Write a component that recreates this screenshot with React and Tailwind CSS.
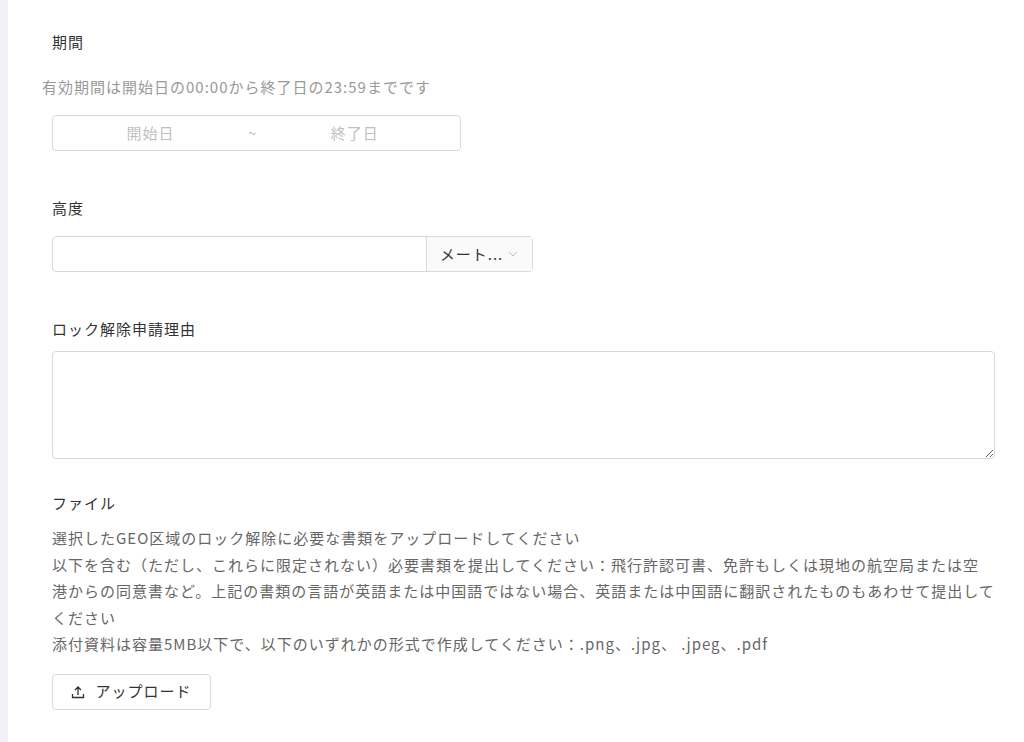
export default function App() {
  return (
    <div className="flex min-h-[742px] bg-white text-[15px] tracking-[1px] text-[#333]" style={{ fontFamily: '"Noto Sans CJK JP", "Liberation Sans", sans-serif' }}>
      <div className="w-[8px] shrink-0 bg-[#f0f2f5]" />
      <div className="flex-1 pl-[44px] pr-[29px] pt-[30px]">
        <div className="h-[24px] leading-[24px]">期間</div>
        <div className="-ml-[10px] mt-[21px] h-[24px] leading-[24px] text-[#999]">有効期間は開始日の00:00から終了日の23:59までです</div>
        <div className="mt-[16px] flex h-[36px] w-[409px] items-center rounded border border-[#d9d9d9] text-[#bfbfbf]">
          <span className="w-[195px] text-center">開始日</span>
          <span>~</span>
          <span className="w-[195px] text-center">終了日</span>
        </div>
        <div className="mt-[45px] h-[24px] leading-[24px]">高度</div>
        <div className="mt-[16px] flex h-[36px] w-[481px] rounded border border-[#d9d9d9]">
          <div className="flex-1" />
          <div className="flex w-[106px] items-center justify-center gap-[4px] border-l border-[#d9d9d9] bg-[#fafafa] text-[#333]">
            <span>メート...</span>
            <svg width="12" height="12" viewBox="0 0 12 12" fill="none" stroke="#bfbfbf" strokeWidth="1"><path d="M2 4l4 4 4-4" /></svg>
          </div>
        </div>
        <div className="mt-[45px] h-[24px] leading-[24px]">ロック解除申請理由</div>
        <textarea className="mt-[10px] block h-[108px] w-full resize-y rounded border border-[#d9d9d9] outline-none" />
        <div className="mt-[32px] h-[24px] leading-[24px]">ファイル</div>
        <div className="mt-[10px] leading-[26.5px] text-[#666]">
          <div>選択したGEO区域のロック解除に必要な書類をアップロードしてください</div>
          <div>以下を含む（ただし、これらに限定されない）必要書類を提出してください：飛行許認可書、免許もしくは現地の航空局または空港からの同意書など。上記の書類の言語が英語または中国語ではない場合、英語または中国語に翻訳されたものもあわせて提出してください</div>
          <div>添付資料は容量5MB以下で、以下のいずれかの形式で作成してください：.png、.jpg、 .jpeg、.pdf</div>
        </div>
        <button className="mt-[16px] flex h-[36px] w-[159px] items-center justify-center gap-[10px] rounded border border-[#d9d9d9] bg-white text-[#333]">
          <svg width="14" height="14" viewBox="0 0 14 14" fill="none" stroke="#333" strokeWidth="1.3"><path d="M7 10V2M4 5l3-3 3 3M1.5 9v3.5h11V9" /></svg>
          <span>アップロード</span>
        </button>
      </div>
    </div>
  );
}
